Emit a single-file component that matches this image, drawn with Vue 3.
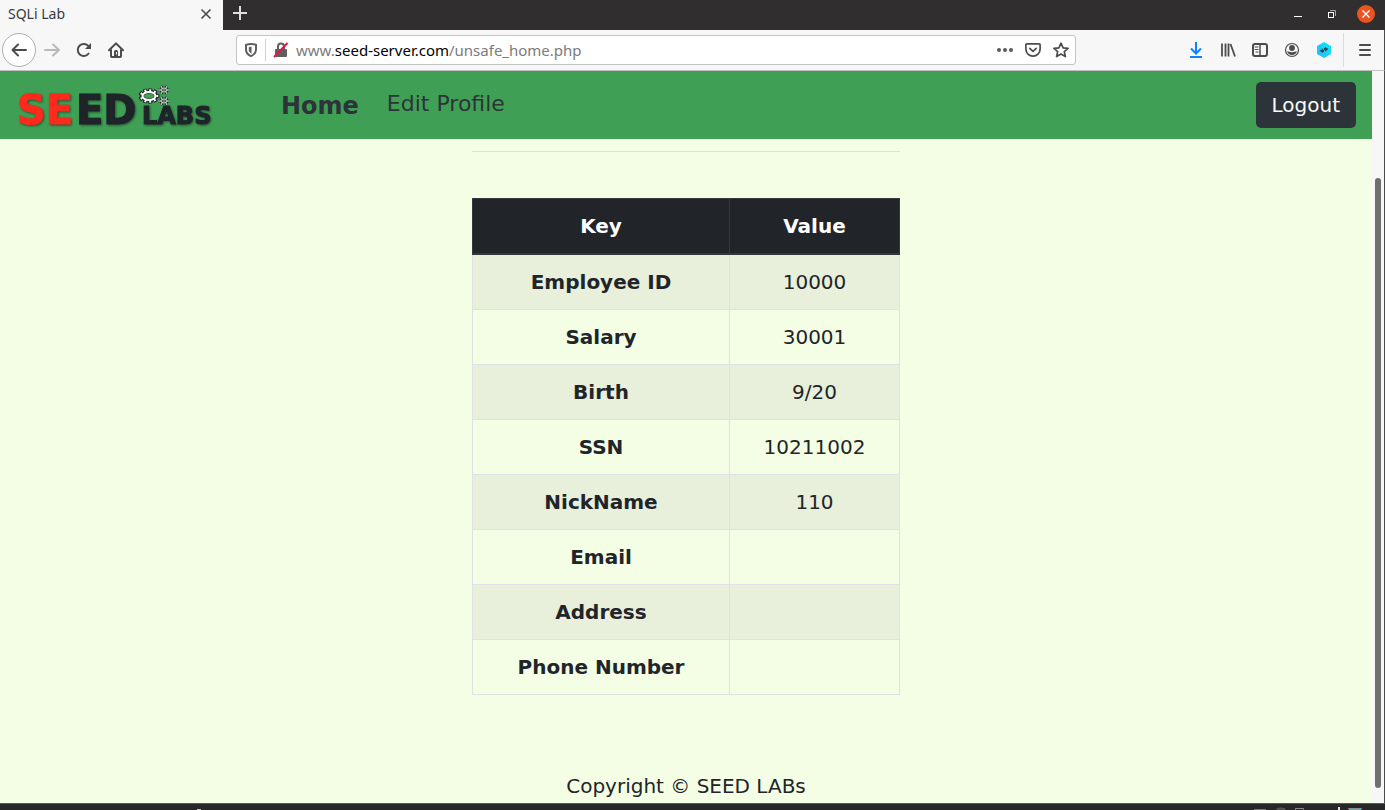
<script setup>
import { ref } from 'vue'

const host = 'seed-server.com'
const path = '/unsafe_home.php'
const address = ref('www.' + host + path)

const rows = [
  { key: 'Employee ID', value: '10000' },
  { key: 'Salary', value: '30001' },
  { key: 'Birth', value: '9/20' },
  { key: 'SSN', value: '10211002' },
  { key: 'NickName', value: '110' },
  { key: 'Email', value: '' },
  { key: 'Address', value: '' },
  { key: 'Phone Number', value: '' },
]
</script>

<template>
  <div class="window">
    <header class="titlebar">
      <div class="tab">
        <span class="tab-title">SQLi Lab</span>
        <button class="plain tab-close" aria-label="Close tab">
          <svg width="12" height="12" viewBox="0 0 12 12"><path d="M1.5 1.5l9 9M10.5 1.5l-9 9" stroke="#4a4a4a" stroke-width="1.6" /></svg>
        </button>
      </div>
      <button class="plain new-tab" aria-label="New tab">
        <svg width="16" height="16" viewBox="0 0 16 16"><path d="M8 1v14M1 8h14" stroke="#dedede" stroke-width="2" /></svg>
      </button>
      <div class="window-buttons">
        <button class="plain wbtn" aria-label="Minimize">
          <svg width="16" height="16" viewBox="0 0 16 16"><path d="M3 10.500h8" stroke="#fff" stroke-width="1" /></svg>
        </button>
        <button class="plain wbtn" aria-label="Restore">
          <svg width="16" height="16" viewBox="0 0 16 16" fill="none"><path d="M6 4.500h5.500V10" stroke="#a5a5a5" /><rect x="4.500" y="6.500" width="5" height="5" stroke="#fff" /></svg>
        </button>
        <button class="plain wclose" aria-label="Close window">
          <svg width="18" height="18" viewBox="0 0 18 18"><circle cx="9" cy="9" r="9" fill="#e95420" /><path d="M5.500 5.500l7 7M12.500 5.500l-7 7" stroke="#fff" stroke-width="1.3" /></svg>
        </button>
      </div>
    </header>

    <div class="toolbar">
      <button class="back" aria-label="Back">
        <svg width="16" height="16" viewBox="0 0 16 16" class="line"><path d="M15 8H1.500M7 2.500L1.500 8 7 13.500" /></svg>
      </button>
      <button class="plain tool" aria-label="Forward">
        <svg width="16" height="16" viewBox="0 0 16 16" class="line faded"><path d="M1 8h14M9 2.500L15 8l-6 5.500" /></svg>
      </button>
      <button class="plain tool" aria-label="Reload">
        <svg width="16" height="16" viewBox="0 0 16 16" class="line"><path d="M12.600 11.500A6 6 0 1 1 12.500 4.200" /><path d="M15 1v6H9z" fill="#4c4c4d" stroke="none" /></svg>
      </button>
      <button class="plain tool" aria-label="Home">
        <svg width="16" height="16" viewBox="0 0 16 16" class="line"><path d="M1 8.200L8 1.400l7 6.800M3 8v6.200a.8.800 0 0 0 .8.800h8.400a.8.800 0 0 0 .8-.8V8" /><path d="M6 15V9.500A1.500 1.500 0 0 1 7.500 8h1A1.500 1.500 0 0 1 10 9.500V15z" fill="#4c4c4d" stroke="none" /><path d="M8.500 10.500v1.500" stroke="#fff" stroke-width="1" /></svg>
      </button>

      <div class="urlbar">
        <button class="plain shield" aria-label="Tracking protection">
          <svg width="14" height="16" viewBox="0 0 14 16" fill="none"><path d="M7 2c-2 0-3.600.2-5 .8v4.600c0 3.200 1.900 5.300 5 6.800 3.100-1.500 5-3.600 5-6.800V2.800C10.600 2.200 9 2 7 2z" stroke="#5f5f60" stroke-width="2" /><path d="M7.500 4.800c-1 0-1.800.1-2.700.4v2.600c0 1.800.9 2.900 2.700 3.900z" fill="#5f5f60" /></svg>
        </button>
        <button class="plain lock" aria-label="Connection not secure">
          <svg width="16" height="16" viewBox="0 0 16 16" fill="none"><path d="M5 7V4.600a3 3 0 0 1 6 0V7" stroke="#5f5f60" stroke-width="2" /><rect x="2" y="7" width="12" height="8" rx="1" fill="#5f5f60" /><path d="M1 15L14.500 1" stroke="#f0104c" stroke-width="2" /></svg>
        </button>
        <div class="address">
          <input v-model="address" type="text" aria-label="Address" spellcheck="false" />
          <span class="address-view" aria-hidden="true">www.<b>{{ host }}</b>{{ path }}</span>
        </div>
        <button class="plain action" aria-label="Page actions">
          <svg width="16" height="16" viewBox="0 0 16 16" fill="#5a5a5b"><circle cx="2" cy="8" r="2" /><circle cx="8" cy="8" r="2" /><circle cx="14" cy="8" r="2" /></svg>
        </button>
        <button class="plain action" aria-label="Save to Pocket">
          <svg width="16" height="16" viewBox="0 0 16 16" class="line"><path stroke-width="1.700" d="M1.900 1.800h12.200a1 1 0 0 1 1 1v4.500a7.100 6.900 0 0 1-14.200 0V2.800a1 1 0 0 1 1-1z" /><path stroke-width="1.700" d="M4.800 6.300L8 9.300l3.200-3" /></svg>
        </button>
        <button class="plain action" aria-label="Bookmark">
          <svg width="16" height="16" viewBox="0 0 16 16" class="line"><path stroke-width="1.700" d="M8 1.200l2.100 4.600 5 .5-3.800 3.300 1.100 5L8 12l-4.400 2.600 1.100-5L.900 6.300l5-.5z" /></svg>
        </button>
      </div>

      <button class="plain tool" aria-label="Downloads">
        <svg width="16" height="16" viewBox="0 0 16 16" fill="none" stroke="#0a84ff" stroke-width="2"><path d="M8 0v11M3 6.500l5 5 5-5M2 15h12" /></svg>
      </button>
      <button class="plain tool" aria-label="Library">
        <svg width="16" height="16" viewBox="0 0 16 16" class="line"><path d="M2 1.500v13M5.500 1.500v13M8.500 1.500v13M10.500 2l4.500 12.500" stroke-linecap="butt" stroke-width="1.800" /></svg>
      </button>
      <button class="plain tool" aria-label="Sidebars">
        <svg width="16" height="16" viewBox="0 0 16 16" class="line"><rect x="1" y="2" width="14" height="12" rx="2" /><path d="M8 2v12" stroke-width="1.500" /><path d="M3 5h3M3 7.500h3M4 10h2" stroke-width="1" /></svg>
      </button>
      <button class="plain tool" aria-label="Account">
        <svg width="16" height="16" viewBox="0 0 16 16" fill="none"><circle cx="8" cy="8" r="6.500" stroke="#4c4c4d" stroke-width="1.200" /><circle cx="8" cy="6" r="2.900" fill="#4c4c4d" /><path d="M3.200 9.300c1.400-.2 2 1 4.800 1s3.400-1.200 4.800-1A5.200 5.200 0 0 1 8 13.200a5.200 5.200 0 0 1-4.800-3.900z" fill="#4c4c4d" /></svg>
      </button>
      <button class="plain tool" aria-label="HTTP Header Live">
        <svg width="16" height="16" viewBox="0 0 16 16"><defs><linearGradient id="hex" x1="0" y1="1" x2="1" y2="0"><stop offset="0" stop-color="#25b4f5" /><stop offset="1" stop-color="#08efff" /></linearGradient></defs><path d="M8 0l7 4v8l-7 4-7-4V4z" fill="url(#hex)" /><path d="M3.500 9L7 6.300v1.500h1V10H7v1zM12.500 7L9 9.700V8.200H8V6h1V5z" fill="#304b58" /></svg>
      </button>
      <span class="separator"></span>
      <button class="plain tool" aria-label="Menu">
        <svg width="16" height="16" viewBox="0 0 16 16" class="line"><path d="M3 3h10M3 8h10M3 13h10" /></svg>
      </button>
    </div>

    <div class="viewport">
      <div class="page">
        <nav class="navbar">
          <a class="brand" href="#" aria-label="SEED Labs">
            <svg width="200" height="60" viewBox="0 0 200 60">
              <g class="wordmark">
                <text x="1" y="49" font-size="40" class="red">SE</text>
                <text x="60" y="49" font-size="40" class="dark">ED</text>
                <text x="126" y="49" font-size="24" class="dark">LABS</text>
              </g>
              <g fill="none">
                <g stroke="#20262b">
                  <ellipse cx="133" cy="21" rx="7" ry="4.500" stroke-width="4" />
                  <ellipse cx="133" cy="21" rx="8.500" ry="5.800" stroke-width="4" pathLength="90" stroke-dasharray="7 3" stroke-dashoffset="3.500" />
                </g>
                <ellipse cx="133" cy="21" rx="6.500" ry="4" stroke="#fff" stroke-width="2" />
                <ellipse cx="133" cy="21" rx="8" ry="5.500" stroke="#fff" stroke-width="2.500" pathLength="90" stroke-dasharray="4 6" stroke-dashoffset="2" />
                <g stroke="#20262b" stroke-width="2.500">
                  <ellipse cx="148" cy="15" rx="3" ry="2" />
                  <ellipse cx="148" cy="26" rx="3" ry="2" />
                  <path d="M142 15h12M145 11l6 8M151 11l-6 8M142 26h12M145 22l6 8M151 22l-6 8" />
                </g>
                <g stroke="#e6ede7" stroke-width="1">
                  <ellipse cx="148" cy="15" rx="3" ry="2" />
                  <ellipse cx="148" cy="26" rx="3" ry="2" />
                  <path d="M142 15h3M151 15h3M145 11l1 2M151 11l-1 2M145 19l1-2M151 19l-1-2M142 26h3M151 26h3M145 22l1 2M151 22l-1 2M145 30l1-2M151 30l-1-2" />
                </g>
                <path d="M146.500 15h3M146.500 26h3" stroke="#3fa055" stroke-width="2" />
              </g>
            </svg>
          </a>
          <a class="nav-home" href="#">Home</a>
          <a class="nav-link" href="#">Edit Profile</a>
          <button class="logout">Logout</button>
        </nav>

        <main class="content">
          <hr />
          <table>
            <thead>
              <tr><th scope="col" class="key-col">Key</th><th scope="col">Value</th></tr>
            </thead>
            <tbody>
              <tr v-for="row in rows" :key="row.key">
                <th scope="row">{{ row.key }}</th>
                <td>{{ row.value }}</td>
              </tr>
            </tbody>
          </table>
          <p class="copyright">Copyright © SEED LABs</p>
        </main>
      </div>
      <div class="scroll-track"><div class="scroll-thumb"></div></div>
    </div>

    <footer class="taskbar">
      <span class="mark"></span>
      <svg width="112" height="6" viewBox="0 0 112 6" fill="none"><path d="M3 5.500h12" stroke="#777" stroke-width="1" /><path d="M26 6c1-2 7-2 8 0" stroke="#555" stroke-width="2" /><path d="M44.500 6V4.500h8V6" stroke="#888" /><path d="M88 3v3" stroke="#ddd" stroke-width="2" /><path d="M97 4.500h14" stroke="#888" /><path d="M98 5.500h12" stroke="#35c9ab" /></svg>
    </footer>
  </div>
</template>

<style>
html,
body {
  margin: 0;
  background: #f4fee5;
}
</style>

<style scoped>
.window {
  box-sizing: border-box;
  display: flex;
  flex-direction: column;
  height: 100vh;
  overflow: hidden;
  font-family: "DejaVu Sans", sans-serif;
  color: #212529;
}
.plain {
  display: flex;
  align-items: center;
  justify-content: center;
  margin: 0;
  padding: 0;
  border: 0;
  background: none;
}
svg {
  display: block;
}
.line {
  fill: none;
  stroke: #4c4c4d;
  stroke-width: 2;
  stroke-linecap: round;
  stroke-linejoin: round;
}
.faded {
  stroke: #b9b9b9;
}

.titlebar {
  flex: none;
  display: flex;
  align-items: center;
  height: 30px;
  background: #312e2f;
}
.tab {
  box-sizing: border-box;
  display: flex;
  align-items: center;
  justify-content: space-between;
  width: 223px;
  height: 30px;
  padding: 0 9px 2px 8px;
  background: #f7f7f8;
  font: 14px/20px "Noto Sans", sans-serif;
  color: #38383d;
}
.tab-close {
  width: 16px;
  height: 16px;
}
.new-tab {
  width: 34px;
  height: 26px;
  align-self: flex-start;
}
.window-buttons {
  display: flex;
  align-items: center;
  gap: 17px;
  height: 28px;
  margin: 0 10px 2px auto;
}
.wbtn {
  width: 16px;
  height: 16px;
}
.wclose {
  width: 18px;
  height: 18px;
}

.toolbar {
  flex: none;
  box-sizing: border-box;
  display: flex;
  align-items: center;
  height: 41px;
  padding: 0 3px 0 2px;
  background: #f7f7f8;
  border-right: 1px solid #4b4b4b;
  border-bottom: 1px solid #c1c1c1;
}
.back {
  flex: none;
  display: flex;
  align-items: center;
  justify-content: center;
  width: 34px;
  height: 34px;
  padding: 0;
  border: 1px solid #adadad;
  border-radius: 50%;
  background: #fff;
}
.tool {
  flex: none;
  width: 32px;
  height: 32px;
}
.urlbar {
  flex: 1;
  box-sizing: border-box;
  display: flex;
  align-items: center;
  height: 30px;
  margin: 0 104px;
  border: 1px solid #c4c4c4;
  border-radius: 3px;
  background: #fff;
}
.shield {
  width: 29px;
  height: 22px;
  border-right: 1px solid #cfcfcf;
}
.lock {
  width: 30px;
  height: 22px;
}
.address {
  position: relative;
  flex: 1;
  height: 28px;
  font: 15px/28px "Noto Sans", sans-serif;
}
.address input {
  box-sizing: border-box;
  width: 100%;
  height: 28px;
  padding: 0;
  border: 0;
  outline: 0;
  background: none;
  font: inherit;
  color: transparent;
  caret-color: #000;
}
.address-view {
  position: absolute;
  top: 0;
  left: 0;
  color: #7b7b7b;
  pointer-events: none;
}
.address-view b {
  font-weight: normal;
  color: #000;
}
.action {
  width: 28px;
  height: 28px;
}
.separator {
  flex: none;
  width: 1px;
  height: 34px;
  margin: 0 5px 0 3px;
  background: #dcdcdc;
}

.viewport {
  flex: 1;
  min-height: 0;
  display: flex;
  border-right: 1px solid #4b4b4b;
}
.page {
  flex: 1;
  background: #f4fee5;
  overflow: hidden;
}
.navbar {
  box-sizing: border-box;
  display: flex;
  align-items: center;
  height: 68px;
  padding: 0 16px;
  background: #3fa055;
}
.navbar a {
  color: #2d3439;
  text-decoration: none;
}
.brand {
  margin-right: 65px;
}
.wordmark {
  font-family: "DejaVu Sans", sans-serif;
  font-weight: bold;
  filter: drop-shadow(1px 1px 1px #245232);
}
.red {
  fill: #ff2a1c;
  stroke: #ff2a1c;
}
.dark {
  fill: #1f232a;
  stroke: #1f232a;
}
.nav-home {
  padding-top: 2px;
  font-size: 24px;
  line-height: 36px;
  font-weight: bold;
}
.nav-link {
  margin-left: 28px;
  padding-bottom: 2px;
  font-size: 22px;
  line-height: 30px;
}
.logout {
  box-sizing: border-box;
  height: 46px;
  margin-left: auto;
  padding: 0 16px;
  border: 0;
  border-radius: 5px;
  background: #2d3439;
  color: #f8f9fa;
  font: 20px/30px "DejaVu Sans", sans-serif;
}

.content {
  width: 428px;
  max-width: 100%;
  margin: 0 auto;
  padding-top: 12px;
  font-size: 20px;
  line-height: 30px;
  text-align: center;
}
hr {
  height: 1px;
  margin: 0 0 46px;
  border: 0;
  background: #dbe4cf;
}
table {
  width: 100%;
  table-layout: fixed;
  border-collapse: collapse;
}
th,
td {
  height: 30px;
  padding: 12px;
  border: 1px solid #dee2e6;
}
.key-col {
  width: 232px;
}
thead th {
  border-color: #32383e;
  border-bottom-width: 2px;
  background: #212529;
  color: #fff;
}
tbody tr:nth-child(odd) {
  background: #e8efda;
}
.copyright {
  margin: 76px 0 0;
}

.scroll-track {
  flex: none;
  box-sizing: border-box;
  width: 12px;
  padding: 107px 3px 15px;
  background: #f7f7f8;
  display: flex;
}
.scroll-thumb {
  flex: 1;
  border-radius: 3px;
  background: #6e6e6e;
}

.taskbar {
  flex: none;
  box-sizing: border-box;
  display: flex;
  justify-content: space-between;
  height: 7px;
  padding: 0 22px 0 197px;
  border-top: 1px solid #555b52;
  background: #272727;
}
.mark {
  align-self: flex-end;
  width: 4px;
  height: 1px;
  background: #c9c9c9;
}
</style>
